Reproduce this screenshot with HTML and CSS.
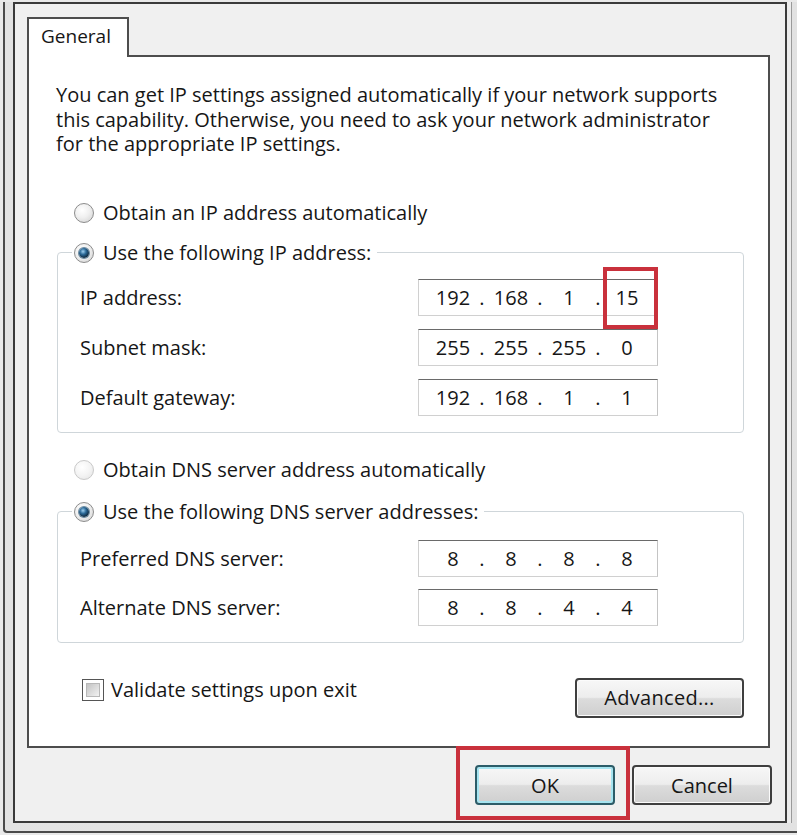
FILE: index.html
```html
<!DOCTYPE html>
<html>
<head>
<meta charset="utf-8">
<title>IPv4 Properties</title>
<link rel="stylesheet" href="styles.css">
</head>
<body>
<div class="frame">
  <div class="client">
    <div class="tabs"><div class="tab">General</div></div>
    <div class="panel">
      <p class="intro">You can get IP settings assigned automatically if your network supports<br>this capability. Otherwise, you need to ask your network administrator<br>for the appropriate IP settings.</p>

      <div class="option option-first"><span class="radio"></span>Obtain an IP address automatically</div>

      <fieldset class="group group-ip">
        <legend class="option"><span class="radio on"></span>Use the following IP address:</legend>
        <div class="row">
          <span class="label">IP address:</span>
          <div class="ipbox">
            <span class="oct">192</span><span class="dot">.</span><span class="oct">168</span><span class="dot">.</span><span class="oct">1</span><span class="dot">.</span><span class="oct">15</span>
            <span class="mark mark-ip"></span>
          </div>
        </div>
        <div class="row">
          <span class="label">Subnet mask:</span>
          <div class="ipbox">
            <span class="oct">255</span><span class="dot">.</span><span class="oct">255</span><span class="dot">.</span><span class="oct">255</span><span class="dot">.</span><span class="oct">0</span>
          </div>
        </div>
        <div class="row">
          <span class="label">Default gateway:</span>
          <div class="ipbox">
            <span class="oct">192</span><span class="dot">.</span><span class="oct">168</span><span class="dot">.</span><span class="oct">1</span><span class="dot">.</span><span class="oct">1</span>
          </div>
        </div>
      </fieldset>

      <div class="option option-dns"><span class="radio disabled"></span>Obtain DNS server address automatically</div>

      <fieldset class="group group-dns">
        <legend class="option"><span class="radio on"></span>Use the following DNS server addresses:</legend>
        <div class="row">
          <span class="label">Preferred DNS server:</span>
          <div class="ipbox">
            <span class="oct">8</span><span class="dot">.</span><span class="oct">8</span><span class="dot">.</span><span class="oct">8</span><span class="dot">.</span><span class="oct">8</span>
          </div>
        </div>
        <div class="row">
          <span class="label">Alternate DNS server:</span>
          <div class="ipbox">
            <span class="oct">8</span><span class="dot">.</span><span class="oct">8</span><span class="dot">.</span><span class="oct">4</span><span class="dot">.</span><span class="oct">4</span>
          </div>
        </div>
      </fieldset>

      <div class="bottom-row">
        <div class="check-option"><span class="checkbox"><span class="check-inner"></span></span>Validate settings upon exit</div>
        <div class="btn btn-advanced">Advanced...</div>
      </div>
    </div>

    <div class="buttons">
      <div class="ok-wrap">
        <div class="btn btn-ok">OK</div>
        <span class="mark mark-ok"></span>
      </div>
      <div class="btn btn-cancel">Cancel</div>
    </div>
  </div>
</div>
</body>
</html>
```

FILE: styles.css
```css
html, body {
  margin: 0;
  padding: 0;
}

body {
  background: #e9e9e9;
  font-family: "Open Sans", "Noto Sans", "DejaVu Sans", sans-serif;
  font-size: 20px;
  color: #161616;
  width: 797px;
  height: 835px;
  overflow: hidden;
}

.frame {
  margin-left: 3px;
  border-left: 2px solid #4a4a4a;
  border-bottom: 2px solid #4a4a4a;
  border-bottom-left-radius: 4px;
  padding: 0 0 8px 8px;
  background: linear-gradient(to right, #e2e2e2, #ececec 60%, #e2e2e2);
}

.client {
  box-sizing: border-box;
  width: 774px;
  height: 821px;
  margin-top: 2px;
  border: 2px solid #3a3a3a;
  background: #f0f0f0;
  box-shadow: 4px 0 0 0 #ececec, 5px 0 0 0 #9a9a9a;
  display: flex;
  flex-direction: column;
}

/* Tab strip */
.tabs {
  display: flex;
  margin-top: 13px;
  padding-left: 12px;
}

.tab {
  box-sizing: border-box;
  width: 102px;
  height: 40px;
  margin-bottom: -2px;
  z-index: 1;
  border: 2px solid #4d4d4d;
  border-bottom: none;
  background: #fff;
  padding-left: 12px;
  line-height: 34px;
  font-size: 19px;
}

.panel {
  box-sizing: border-box;
  height: 693px;
  margin: 0 15px 0 12px;
  border: 2px solid #4d4d4d;
  background: #fff;
  padding: 0 24px 0 28px;
  display: flex;
  flex-direction: column;
}

.intro {
  margin: 26px 0 0 -1px;
  line-height: 24.5px;
  white-space: nowrap;
}

/* Radio options */
.option {
  display: flex;
  align-items: center;
  height: 24px;
  white-space: nowrap;
}

.option-first {
  margin-top: 44px;
  padding-left: 17px;
}

.option-dns {
  margin-top: 25px;
  padding-left: 17px;
}

.radio {
  box-sizing: border-box;
  width: 20px;
  height: 20px;
  margin-right: 9px;
  border-radius: 50%;
  border: 1px solid #8c8c8c;
  background: radial-gradient(circle at 40% 35%, #ffffff 0%, #f0f0f0 45%, #cfcfcf 100%);
  display: flex;
  align-items: center;
  justify-content: center;
  flex: none;
}

.radio.on::after {
  content: "";
  width: 10px;
  height: 10px;
  border-radius: 50%;
  background: radial-gradient(circle at 40% 35%, #9fd0f0 0%, #2c6a98 35%, #0c2438 75%, #061420 100%);
  box-shadow: 0 0 0 1px #6a8aa0;
}

.radio.disabled {
  border-color: #c9c9c9;
  background: radial-gradient(circle at 40% 35%, #ffffff 0%, #f4f4f4 50%, #e2e2e2 100%);
}

/* Group boxes */
.group {
  margin: 16px 0 0;
  border: 1px solid #cfd6da;
  border-radius: 4px;
  padding: 14px 0 16px 22px;
  min-width: 0;
}

.group legend {
  padding: 0 6px 0 2px;
  margin-left: -8px;
}

.group-dns {
  margin-top: 18px;
  padding-top: 16px;
}

.row {
  display: flex;
  align-items: center;
  height: 37px;
}

.row + .row {
  margin-top: 13px;
}

.group-dns .row + .row {
  margin-top: 12px;
}

.label {
  width: 338px;
  flex: none;
}

/* IP boxes */
.ipbox {
  position: relative;
  box-sizing: border-box;
  width: 240px;
  height: 37px;
  border: 1px solid #d0d0d0;
  border-top-color: #6a6a6a;
  border-right-color: #c4c4c4;
  background: #fff;
  display: flex;
  align-items: center;
  padding-left: 12px;
}

.oct {
  width: 44px;
  text-align: center;
}

.dot {
  width: 14px;
  text-align: center;
}

/* Annotation boxes */
.mark {
  position: absolute;
  box-sizing: border-box;
  border: 4px solid #c9313c;
  pointer-events: none;
}

.mark-ip {
  right: -1px;
  top: -13px;
  width: 55px;
  height: 62px;
}

/* Bottom row of panel */
.bottom-row {
  margin-top: 35px;
  display: flex;
  align-items: flex-start;
  justify-content: space-between;
}

.check-option {
  display: flex;
  align-items: center;
  height: 24px;
  padding-left: 25px;
  white-space: nowrap;
}

.checkbox {
  box-sizing: border-box;
  width: 22px;
  height: 22px;
  margin-right: 7px;
  border: 1px solid #555;
  padding: 3px;
  background: #fff;
  display: flex;
}

.check-inner {
  flex: 1;
  border: 1px solid #b8b8b8;
  background: linear-gradient(135deg, #c4c4c4, #f2f2f2);
}

/* Buttons */
.btn {
  box-sizing: border-box;
  height: 40px;
  border: 2px solid #3f3f3f;
  border-radius: 4px;
  background: linear-gradient(#f7f7f7 0%, #ededed 48%, #dcdcdc 52%, #cfcfcf 100%);
  box-shadow: inset 0 0 0 1px #fbfbfb;
  display: flex;
  align-items: center;
  justify-content: center;
}

.btn-advanced {
  width: 169px;
  letter-spacing: 0.3px;
}

.buttons {
  display: flex;
  justify-content: flex-end;
  gap: 17px;
  margin-top: 17px;
  padding-right: 13px;
}

.ok-wrap {
  position: relative;
}

.btn-ok {
  width: 140px;
  border-color: #2c5c68;
  box-shadow: inset 0 0 0 2px #a6e4f0;
}

.btn-cancel {
  width: 140px;
}

.mark-ok {
  left: -19px;
  top: -19px;
  width: 174px;
  height: 74px;
}
```
